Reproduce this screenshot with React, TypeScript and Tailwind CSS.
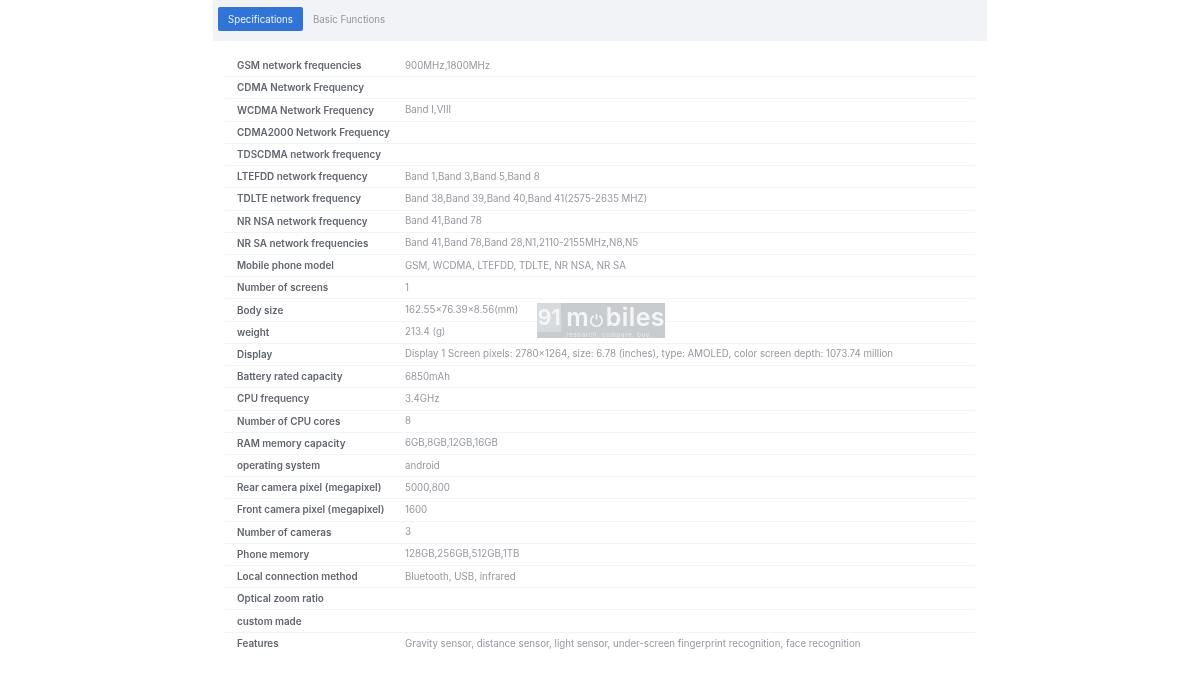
const specs: [string, string][] = [
  ['GSM network frequencies', '900MHz,1800MHz'],
  ['CDMA Network Frequency', ''],
  ['WCDMA Network Frequency', 'Band I,VIII'],
  ['CDMA2000 Network Frequency', ''],
  ['TDSCDMA network frequency', ''],
  ['LTEFDD network frequency', 'Band 1,Band 3,Band 5,Band 8'],
  ['TDLTE network frequency', 'Band 38,Band 39,Band 40,Band 41(2575-2635 MHZ)'],
  ['NR NSA network frequency', 'Band 41,Band 78'],
  ['NR SA network frequencies', 'Band 41,Band 78,Band 28,N1,2110-2155MHz,N8,N5'],
  ['Mobile phone model', 'GSM, WCDMA, LTEFDD, TDLTE, NR NSA, NR SA'],
  ['Number of screens', '1'],
  ['Body size', '162.55×76.39×8.56(mm)'],
  ['weight', '213.4 (g)'],
  ['Display', 'Display 1 Screen pixels: 2780×1264, size: 6.78 (inches), type: AMOLED, color screen depth: 1073.74 million'],
  ['Battery rated capacity', '6850mAh'],
  ['CPU frequency', '3.4GHz'],
  ['Number of CPU cores', '8'],
  ['RAM memory capacity', '6GB,8GB,12GB,16GB'],
  ['operating system', 'android'],
  ['Rear camera pixel (megapixel)', '5000,800'],
  ['Front camera pixel (megapixel)', '1600'],
  ['Number of cameras', '3'],
  ['Phone memory', '128GB,256GB,512GB,1TB'],
  ['Local connection method', 'Bluetooth, USB, infrared'],
  ['Optical zoom ratio', ''],
  ['custom made', ''],
  ['Features', 'Gravity sensor, distance sensor, light sensor, under-screen fingerprint recognition, face recognition'],
];

export default function App() {
  return (
    <div className="h-[675px] w-[1200px] overflow-hidden bg-white font-['Inter',sans-serif] blur-[0.5px]">
      <div className="relative mx-auto w-[774px]">
        <div className="flex h-[41px] items-start gap-[10px] bg-[#f1f3f7] pl-[5px] pt-[7px] text-[9.7px] leading-[24px]">
          <button className="h-[24px] w-[85px] rounded-[2px] bg-[#2f74d6] pt-[1px] text-[#eef3fb]">Specifications</button>
          <button className="h-[24px] pt-[1px] text-[#9398a1]">Basic Functions</button>
        </div>

        <div className="px-[12px] pt-[14px]">
          {specs.map(([name, value]) => (
            <div key={name} className="flex h-[22.23px] items-center border-b border-[#f3f4f6] pl-[12px] last:border-b-0">
              <div className="w-[168px] shrink-0 text-[9.9px] leading-[13px] font-semibold whitespace-nowrap text-[#60656e]">{name}</div>
              <div className="text-[9.72px] leading-[14px] whitespace-nowrap text-[#94989f]">{value}</div>
            </div>
          ))}
        </div>

        {/* watermark */}
        <div className="absolute top-[303px] left-[324px] flex h-[35px] w-[128px] bg-[#c8cccf] text-[#f4f5f6]">
          <div className="flex h-[29px] w-[28px] items-center justify-center bg-[#d8dbdd] text-[21px] leading-none font-bold">91</div>
          <div className="flex flex-1 flex-col pl-[5px]">
            <div className="flex h-[29px] items-end text-[25px] leading-[29px] font-semibold">
              <span>m</span>
              <svg viewBox="0 0 16 16" className="mb-[5px] h-[15px] w-[15px] shrink-0" fill="none" stroke="currentColor" strokeWidth="1.8">
                <path d="M5 4a6 6 0 1 0 6 0" />
                <path d="M8 2v6" />
              </svg>
              <span className="ml-[2px] tracking-[0.4px]">biles</span>
            </div>
            <span className="text-[6px] leading-[6px] tracking-[0.75px] whitespace-nowrap text-[#e8eaeb]">research. compare. buy.</span>
          </div>
        </div>
      </div>
    </div>
  );
}
